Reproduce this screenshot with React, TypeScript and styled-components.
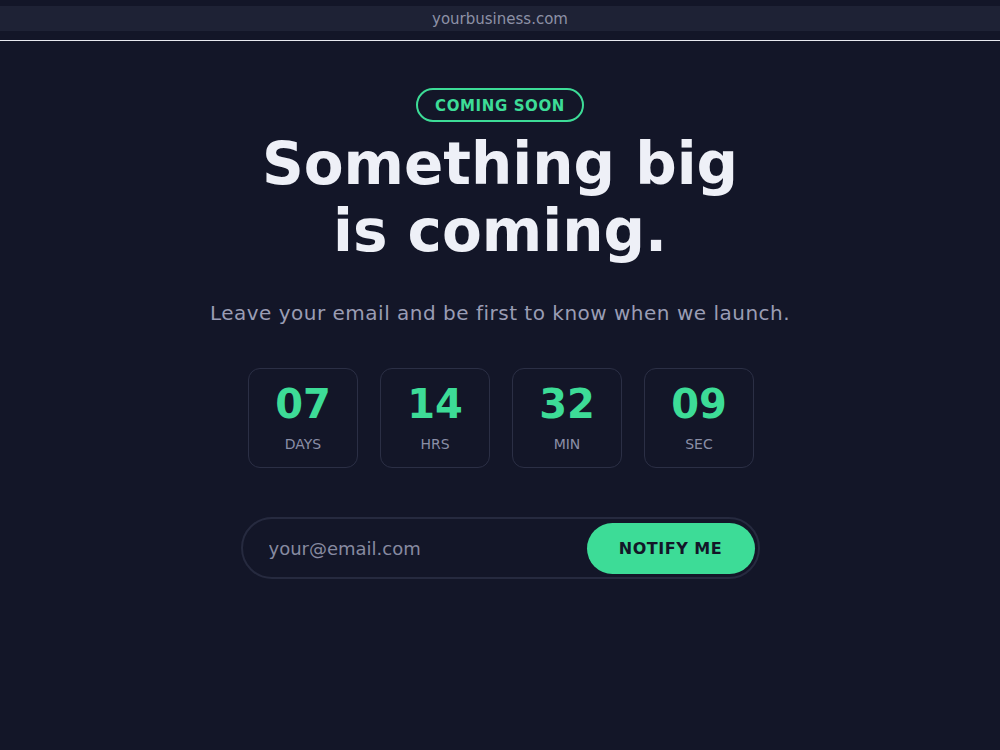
import React from 'react';
import styled, { createGlobalStyle } from 'styled-components';

const GlobalStyle = createGlobalStyle`
    html, body {
        margin: 0;
        padding: 0;
        background: #131628;
    }
    * {
        box-sizing: border-box;
    }
`

const Page = styled.div`
    min-height: 750px;
    background: #131628;
    font-family: 'DejaVu Sans', 'Noto Sans', sans-serif;
    padding-top: 6px;
    display: flex;
    flex-direction: column;
`

const AddressBar = styled.div`
    height: 25px;
    background: #1e2235;
    display: flex;
    align-items: center;
    justify-content: center;
    font-size: 15px;
    color: #8d91a6;
`

const Divider = styled.div`
    height: 1px;
    margin-top: 9px;
    background: #e8e9f0;
`

const Main = styled.main`
    display: flex;
    flex-direction: column;
    align-items: center;
    padding-top: 47px;
`

const Badge = styled.div`
    height: 34px;
    width: 168px;
    padding-top: 1px;
    border: 2px solid #3ddc97;
    border-radius: 999px;
    display: flex;
    align-items: center;
    justify-content: center;
    color: #3ddc97;
    font-weight: 700;
    font-size: 15px;
    letter-spacing: 0.6px;
`

const Headline = styled.h1`
    margin: 9px 0 0;
    font-size: 58px;
    line-height: 67px;
    font-weight: 700;
    color: #eef0f7;
    text-align: center;
`

const Subtitle = styled.p`
    margin: 34px 0 0;
    font-size: 20px;
    line-height: 28px;
    letter-spacing: 0.5px;
    color: #9a9db4;
    text-align: center;
`

const Countdown = styled.div`
    margin-top: 41px;
    margin-left: 2px;
    display: flex;
    gap: 22px;
`

const TimeBox = styled.div`
    width: 110px;
    height: 100px;
    border: 1.5px solid #2b2f45;
    border-radius: 12px;
    display: flex;
    flex-direction: column;
    align-items: center;
    justify-content: center;
    gap: 12px;
    padding-top: 1px;
`

const TimeValue = styled.div`
    font-size: 40px;
    line-height: 40px;
    font-weight: 700;
    color: #3ddc97;
`

const TimeLabel = styled.div`
    font-size: 14px;
    line-height: 17px;
    color: #8a8ea6;
`

const Form = styled.form`
    margin-top: 49px;
    width: 519px;
    height: 62px;
    border: 2px solid #262a3f;
    border-radius: 999px;
    padding: 4px 3px 4px 26px;
    display: flex;
    align-items: center;
`

const EmailInput = styled.input`
    flex: 1;
    min-width: 0;
    padding: 0;
    background: transparent;
    border: none;
    outline: none;
    font-family: 'DejaVu Sans', sans-serif;
    font-size: 18px;
    color: #eef0f7;
    &::placeholder {
        color: #878aa0;
    }
`

const NotifyButton = styled.button`
    width: 168px;
    height: 51px;
    border: none;
    border-radius: 999px;
    background: #3ddc97;
    color: #131628;
    font-family: 'DejaVu Sans', sans-serif;
    font-weight: 700;
    font-size: 16px;
    letter-spacing: 0.5px;
    cursor: pointer;
`

const TIME = [
    { value: '07', label: 'DAYS' },
    { value: '14', label: 'HRS' },
    { value: '32', label: 'MIN' },
    { value: '09', label: 'SEC' },
]

export default function App() {
    return (
        <>
            <GlobalStyle />
            <Page>
                <AddressBar>yourbusiness.com</AddressBar>
                <Divider />
                <Main>
                    <Badge>COMING SOON</Badge>
                    <Headline>Something big<br />is coming.</Headline>
                    <Subtitle>Leave your email and be first to know when we launch.</Subtitle>
                    <Countdown>
                        {TIME.map((t) => (
                            <TimeBox key={t.label}>
                                <TimeValue>{t.value}</TimeValue>
                                <TimeLabel>{t.label}</TimeLabel>
                            </TimeBox>
                        ))}
                    </Countdown>
                    <Form onSubmit={(e) => e.preventDefault()}>
                        <EmailInput type="email" placeholder="your@email.com" />
                        <NotifyButton type="submit">NOTIFY ME</NotifyButton>
                    </Form>
                </Main>
            </Page>
        </>
    );
}
